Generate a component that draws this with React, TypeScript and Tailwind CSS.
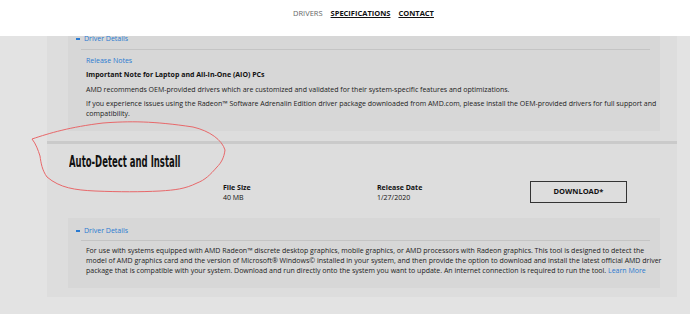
import React from "react";

const body = { fontFamily: '"Open Sans", "Noto Sans", sans-serif' };

export default function App() {
  return (
    <div className="relative w-[690px] h-[314px] overflow-hidden bg-[#e3e3e3]" style={body}>
      {/* header */}
      <div className="h-[36px] bg-white flex items-start pt-[8px] pl-[293px] gap-[8px] text-[7.5px] leading-[10px] uppercase">
        <span className="text-[#666]">Drivers</span>
        <span className="font-bold text-[#111] underline">Specifications</span>
        <span className="font-bold text-[#111] underline">Contact</span>
      </div>

      {/* main */}
      <div className="pl-[47px]">
        <div className="w-[630px] bg-[#dddddd] pb-[9px]">
          {/* section 1 inner panel */}
          <div className="ml-[21px] mr-[17px] bg-[#d7d7d7] pb-[12px]">
            <div className="mx-[13px] mr-[10px] border-b border-[#c4c4c4] pb-[7px] flex items-center text-[7px] leading-[6px] text-[#2a7ad1]">
              <span className="w-[4px] h-[1.5px] bg-[#2a7ad1] ml-[-5px] mr-[4px]" />
              <span>Driver Details</span>
            </div>
            <div className="pl-[18px] text-[7px] leading-[10px] text-[#222]">
              <div className="mt-[6px] text-[#2a7ad1]">Release Notes</div>
              <div className="mt-[4px] font-bold text-[#111]">Important Note for Laptop and All-In-One (AIO) PCs</div>
              <div className="mt-[5px]">AMD recommends OEM-provided drivers which are customized and validated for their system-specific features and optimizations.</div>
              <div className="mt-[4px] whitespace-nowrap">
                If you experience issues using the Radeon™ Software Adrenalin Edition driver package downloaded from AMD.com, please install the OEM-provided drivers for full support and
                <br />
                compatibility.
              </div>
            </div>
          </div>

          {/* thick divider */}
          <div className="mt-[10px] h-[3px] bg-[#cacaca]" />

          {/* section 2 */}
          <div className="pl-[22px]">
            <div
              className="mt-[8px] h-[20px] leading-[20px] text-[15px] font-bold text-[#111] origin-left scale-x-[0.63] whitespace-nowrap"
              style={{ fontFamily: '"DejaVu Sans Condensed", "Liberation Sans Narrow", sans-serif' }}
            >
              Auto-Detect and Install
            </div>
            <div className="mt-[9px] flex items-start pl-[154px]">
              <div className="w-[154px] pt-[2px] text-[7px] leading-[10px] text-[#111]">
                <div className="font-bold">File Size</div>
                <div>40 MB</div>
              </div>
              <div className="w-[153px] pt-[2px] text-[7px] leading-[10px] text-[#111]">
                <div className="font-bold">Release Date</div>
                <div>1/27/2020</div>
              </div>
              <div className="w-[97px] h-[22px] border-[1.5px] border-[#333] flex items-center justify-center text-[7.5px] font-bold text-[#111]">
                DOWNLOAD*
              </div>
            </div>
          </div>

          {/* section 2 inner panel */}
          <div className="mt-[15px] ml-[21px] mr-[17px] bg-[#d7d7d7] pt-[8px] pb-[12px]">
            <div className="ml-[13px] mr-[10px] border-b border-[#c4c4c4] pb-[4px] flex items-center text-[7px] leading-[10px] text-[#2a7ad1]">
              <span className="w-[4px] h-[1.5px] bg-[#2a7ad1] ml-[-5px] mr-[4px]" />
              <span>Driver Details</span>
            </div>
            <div className="pl-[18px] mt-[5px] text-[7px] leading-[10px] text-[#222] whitespace-nowrap">
              For use with systems equipped with AMD Radeon™ discrete desktop graphics, mobile graphics, or AMD processors with Radeon graphics. This tool is designed to detect the
              <br />
              model of AMD graphics card and the version of Microsoft® Windows© installed in your system, and then provide the option to download and install the latest official AMD driver
              <br />
              package that is compatible with your system. Download and run directly onto the system you want to update. An internet connection is required to run the tool.{" "}
              <span className="text-[#2a7ad1]">Learn More</span>
            </div>
          </div>
        </div>
      </div>

      {/* red hand-drawn annotation */}
      <svg className="absolute left-0 top-0 pointer-events-none" width="690" height="314" viewBox="0 0 690 314">
        <path
          d="M32 139 C 50 133, 70 127, 103 123 C 130 121, 153 121, 193 127 C 210 131, 222 140, 225 150 C 224 158, 221 163, 217 167 C 210 175, 205 180, 197 183 C 185 189, 175 190, 160 191 C 140 192, 120 192, 95 191 C 75 190, 60 188, 47 177 C 42 170, 41 163, 40 156 C 38 150, 36 144, 32 139 Z"
          fill="none"
          stroke="#e8686a"
          strokeWidth="1"
        />
      </svg>
    </div>
  );
}
